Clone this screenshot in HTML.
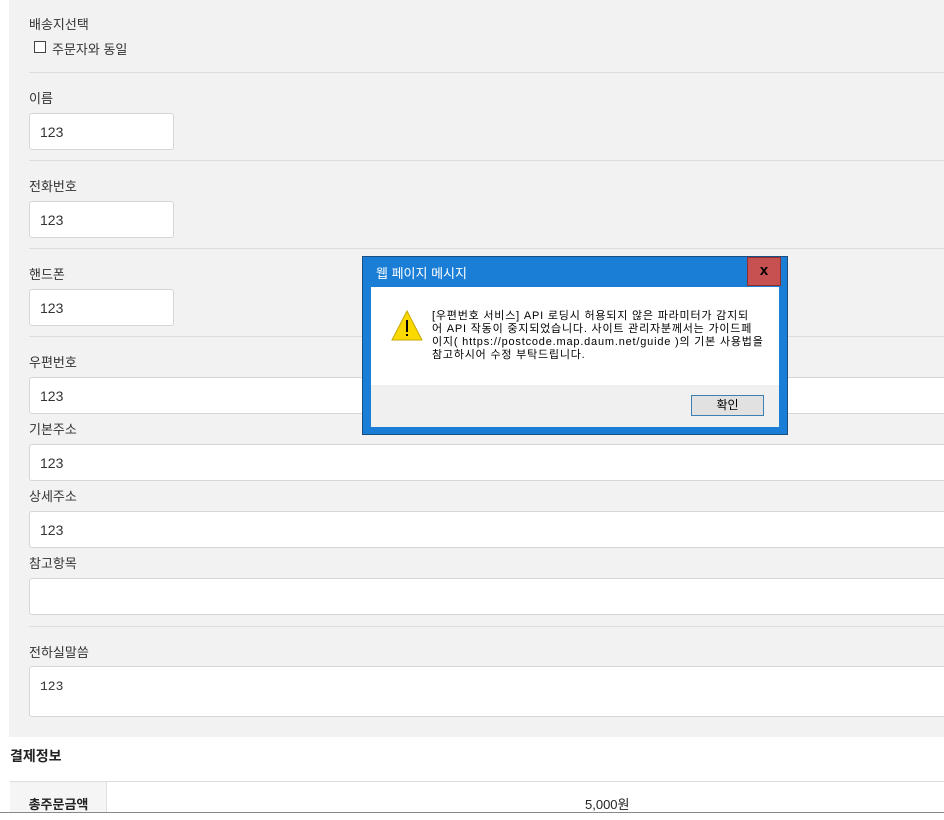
<!DOCTYPE html>
<html><head><meta charset="utf-8"><style>
*{box-sizing:border-box;margin:0;padding:0}
body{width:944px;height:820px;overflow:hidden;background:#fff;font-family:"Liberation Sans","Noto Sans CJK KR",sans-serif;color:#333;position:relative}
.a{position:absolute}
.panel{left:9px;top:0;width:935px;height:737px;background:#f2f2f2}
.lbl{font-size:13px;color:#333;left:29px}
.hr{left:29px;right:0;height:1px;background:#ddd}
.in{left:29px;height:37px;background:#fff;border:1px solid #d6d6d6;border-radius:3px;font-size:14px;color:#333;padding:10px 0 0 10px}
.w{width:930px}
.s{width:145px}
</style></head><body>
<div class="a panel"></div>
<div class="a lbl" style="top:14px">배송지선택</div>
<div class="a" style="left:34px;top:41px;width:12px;height:12px;border:1px solid #444;background:#fff"></div>
<div class="a lbl" style="left:52px;top:39px">주문자와 동일</div>
<div class="a hr" style="top:72px"></div>
<div class="a lbl" style="top:88px">이름</div>
<div class="a in s" style="top:113px">123</div>
<div class="a hr" style="top:160px"></div>
<div class="a lbl" style="top:176px">전화번호</div>
<div class="a in s" style="top:201px">123</div>
<div class="a hr" style="top:248px"></div>
<div class="a lbl" style="top:264px">핸드폰</div>
<div class="a in s" style="top:289px">123</div>
<div class="a hr" style="top:336px"></div>
<div class="a lbl" style="top:352px">우편번호</div>
<div class="a in w" style="top:377px">123</div>
<div class="a lbl" style="top:419px">기본주소</div>
<div class="a in w" style="top:444px">123</div>
<div class="a lbl" style="top:486px">상세주소</div>
<div class="a in w" style="top:511px">123</div>
<div class="a lbl" style="top:553px">참고항목</div>
<div class="a in w" style="top:578px"></div>
<div class="a hr" style="top:626px"></div>
<div class="a lbl" style="top:642px">전하실말씀</div>
<div class="a in w" style="top:666px;height:51px;font-family:'Liberation Mono','Noto Sans CJK KR',monospace;font-size:13px;padding-top:12px">123</div>
<div class="a" style="left:10px;top:746px;font-size:14px;font-weight:bold;color:#222">결제정보</div>
<div class="a" style="left:10px;top:781px;right:0;height:1px;background:#ddd"></div>
<div class="a" style="left:10px;top:782px;width:97px;height:30px;background:#f5f5f5;border-right:1px solid #e0e0e0"></div>
<div class="a" style="left:10px;width:97px;top:794px;text-align:center;font-size:13px;font-weight:bold;color:#222">총주문금액</div>
<div class="a" style="left:585px;top:794px;font-size:13px;color:#222">5,000원</div>
<div class="a" style="left:0;right:0;top:812px;height:1px;background:#888"></div>

<div class="a" style="left:362px;top:256px;width:426px;height:179px;background:#1a7ed6;border:1px solid #1c4e80"></div>
<div class="a" style="left:376px;top:263px;font-size:13px;color:#fff">웹 페이지 메시지</div>
<div class="a" style="left:747px;top:257px;width:34px;height:29px;background:#c75050;border:1px solid #8f3030;color:#000;font-weight:bold;font-size:15px;text-align:center;line-height:26px">x</div>
<div class="a" style="left:371px;top:287px;width:408px;height:98px;background:#fff"></div>
<div class="a" style="left:371px;top:385px;width:408px;height:42px;background:#f0f0f0"></div>
<svg class="a" style="left:390px;top:309px" width="34" height="34" viewBox="0 0 34 34"><path d="M17 2 L32 31 L2 31 Z" fill="#f9d900" stroke="#c9a800" stroke-width="1"/><rect x="16" y="11" width="2" height="12" fill="#000"/><rect x="16" y="25" width="2" height="2" fill="#000"/></svg>
<div class="a" style="left:432px;top:310px;width:345px;font-size:11px;line-height:13px;letter-spacing:0.8px;color:#000;white-space:nowrap">[우편번호 서비스] API 로딩시 허용되지 않은 파라미터가 감지되<br>어 API 작동이 중지되었습니다. 사이트 관리자분께서는 가이드페<br>이지( https://postcode.map.daum.net/guide )의 기본 사용법을<br>참고하시어 수정 부탁드립니다.</div>
<div class="a" style="left:691px;top:395px;width:73px;height:21px;background:#e1e1e1;border:1px solid #adadad;outline:1px solid #3c7fb1;outline-offset:-1px;font-size:12px;text-align:center;line-height:19px;color:#000">확인</div>
</body></html>
